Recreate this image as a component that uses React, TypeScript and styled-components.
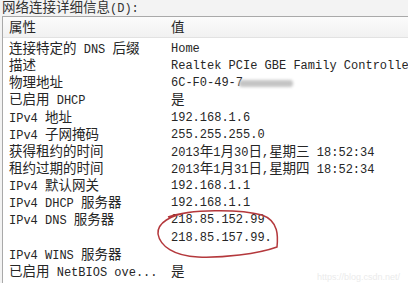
import styled, { createGlobalStyle } from "styled-components"

const GlobalStyle = createGlobalStyle`
  html, body { margin: 0; padding: 0; background: #f3f3f3; }
  body { width: 408px; height: 283px; overflow: hidden; }
`

// Styles
const Dialog = styled.div`
  position: relative;
  width: 408px;
  height: 283px;
  overflow: hidden;
  font-family: "Liberation Mono", "Noto Sans CJK SC", monospace;
  font-size: 12px;
  color: #262626;
`
const Title = styled.div`
  height: 16px;
  padding-left: 2px;
  line-height: 11px;
  color: #333;
`
const ListBox = styled.div`
  margin-left: 2px;
  border-top: 1px solid #a9a9a9;
  border-left: 1px solid #a9a9a9;
  background: #fff;
  height: 300px;
`
const Header = styled.div`
  display: grid;
  grid-template-columns: 162px 1fr;
  height: 20px;
  line-height: 24px;
  background: linear-gradient(#fbfbfb, #f1f1f1);
  border-bottom: 1px solid #e2e2e2;
  padding-left: 6px;
`
const Rows = styled.div`
  padding-top: 3px;
`
const Row = styled.div`
  display: grid;
  grid-template-columns: 162px 1fr;
  height: 17.15px;
  line-height: 17px;
  padding-left: 6px;
  white-space: nowrap;
`
const Cell = styled.div``
const Zh = styled.span`
  font-family: "Noto Sans CJK SC", sans-serif;
  font-size: 13.5px;
  line-height: 1;
`
const Smudge = styled.span`
  display: inline-block;
  width: 54px;
  height: 7px;
  margin-left: -4px;
  vertical-align: -1px;
  background: #c4c4c4;
  border-radius: 3px;
  filter: blur(1.5px);
`
const Mark = styled.svg`
  position: absolute;
  left: 0;
  top: 0;
  pointer-events: none;
`
const Watermark = styled.div`
  position: absolute;
  right: 8px;
  bottom: 1px;
  font-family: "Liberation Sans", sans-serif;
  font-size: 9px;
  color: #ebebeb;
`

const mix = (s: string) =>
  s.split(/([\u3000-\u9fff]+)/).map((p, i) => (i % 2 ? <Zh key={i}>{p}</Zh> : p))

const rows: [string, React.ReactNode][] = [
  ["连接特定的 DNS 后缀", "Home"],
  ["描述", "Realtek PCIe GBE Family Controller"],
  ["物理地址", <>6C-F0-49-7<Smudge /></>],
  ["已启用 DHCP", mix("是")],
  ["IPv4 地址", "192.168.1.6"],
  ["IPv4 子网掩码", "255.255.255.0"],
  ["获得租约的时间", mix("2013年1月30日,星期三 18:52:34")],
  ["租约过期的时间", mix("2013年1月31日,星期四 18:52:34")],
  ["IPv4 默认网关", "192.168.1.1"],
  ["IPv4 DHCP 服务器", "192.168.1.1"],
  ["IPv4 DNS 服务器", "218.85.152.99"],
  ["", "218.85.157.99."],
  ["IPv4 WINS 服务器", ""],
  ["已启用 NetBIOS ove...", mix("是")],
]

const App: React.FC = () => {
  return (
    <Dialog>
      <GlobalStyle />
      <Title>{mix("网络连接详细信息")}(D):</Title>
      <ListBox>
        <Header>
          <Cell>{mix("属性")}</Cell>
          <Cell>{mix("值")}</Cell>
        </Header>
        <Rows>
          {rows.map(([k, v], i) => (
            <Row key={i}>
              <Cell>{mix(k)}</Cell>
              <Cell>{v}</Cell>
            </Row>
          ))}
        </Rows>
      </ListBox>
      <Mark width="408" height="283">
        <path
          d="M168 217 C190 209, 240 209, 262 215 C279 221, 278 237, 277 247 C258 254, 222 258, 198 257 C174 256, 160 246, 158 234 C157 223, 170 215, 192 212"
          fill="none"
          stroke="#b4383c"
          strokeWidth="1.5"
        />
      </Mark>
      <Watermark>https://blog.csdn.net/</Watermark>
    </Dialog>
  )
}

export default App
